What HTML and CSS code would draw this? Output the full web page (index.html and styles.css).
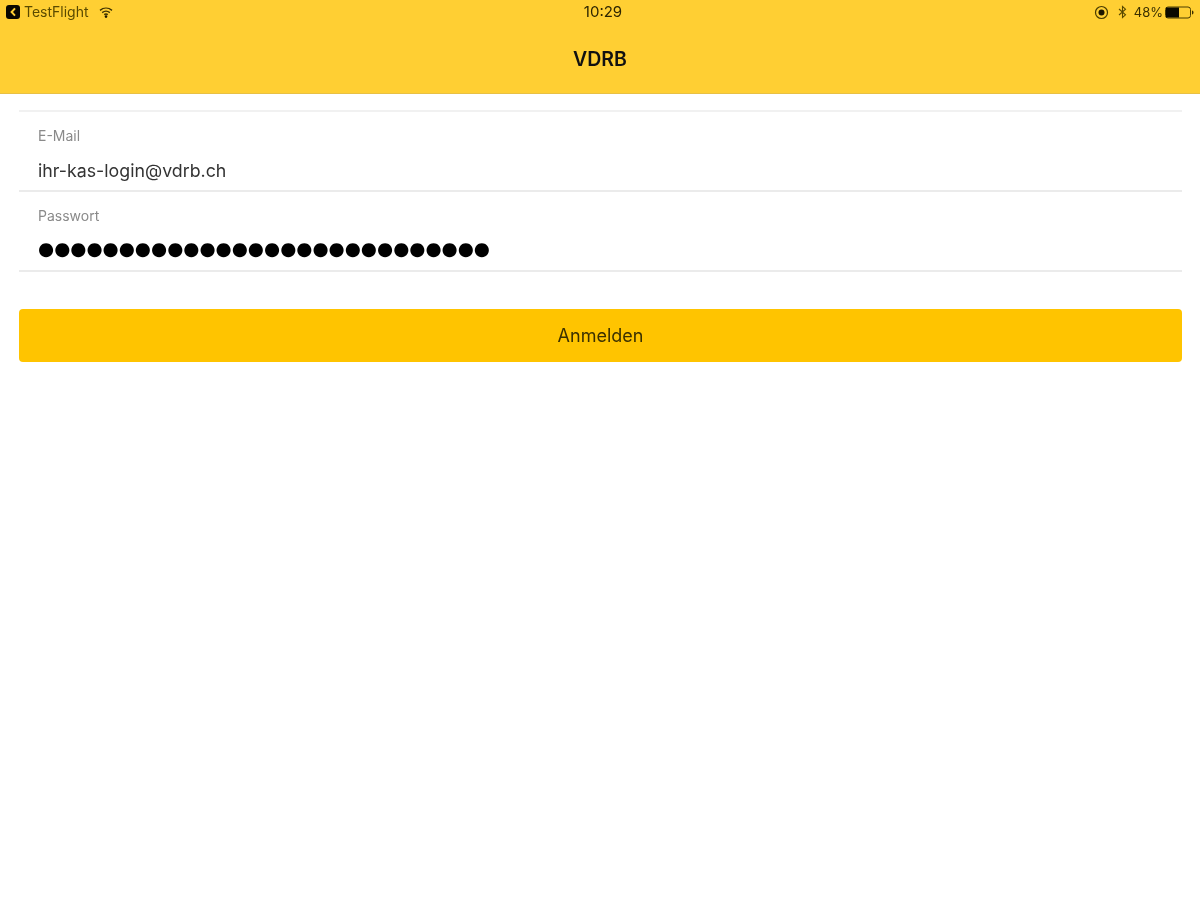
FILE: index.html
```html
<!DOCTYPE html>
<html lang="de">
<head>
<meta charset="utf-8">
<title>VDRB</title>
<link rel="stylesheet" href="styles.css">
</head>
<body>
<header class="nav">
  <div class="status">
    <div class="status-side">
      <svg class="tf-icon" width="14" height="14" viewBox="0 0 14 14"><rect width="14" height="14" rx="3" fill="#0a0800"/><path d="M9 3.4 5.6 7 9 10.6" fill="none" stroke="#ffcf33" stroke-width="2"/></svg>
      <span class="status-text tf-label">TestFlight</span>
      <svg class="wifi" width="14" height="11" viewBox="0 0 14 11"><path d="M1 3.4C4.6.4 9.4.4 13 3.4M3.2 5.6c2.3-1.8 5.3-1.8 7.6 0M5.2 7.6c1-.7 2.600-.7 3.600 0" fill="none" stroke="#3c3000" stroke-width="1.4"/><circle cx="7" cy="9.6" r="1.3" fill="#1c1600"/></svg>
    </div>
    <span class="status-text clock">10:29</span>
    <div class="status-side status-right">
      <svg width="15" height="15" viewBox="0 0 15 15"><circle cx="7.5" cy="7.5" r="6" fill="none" stroke="#4a3c00" stroke-width="1.2"/><circle cx="7.5" cy="7.5" r="3" fill="#1c1600"/></svg>
      <svg class="bt" width="9" height="14" viewBox="0 0 9 14"><path d="M1 4 7.500 9.800 4.500 12.500V1.500L7.500 4.200 1 10" fill="none" stroke="#5a4a00" stroke-width="1.100"/></svg>
      <span class="status-text battery-label">48%</span>
      <svg class="battery" width="29" height="13" viewBox="0 0 29 13"><rect x=".5" y="1" width="25" height="11" rx="2.500" fill="none" stroke="#4a3c00"/><rect x="1" y="1.500" width="13" height="10" fill="#0c0a00"/><path d="M27 4.500c1 .4 1.500 1.100 1.500 2s-.5 1.600-1.500 2z" fill="#3c3000"/></svg>
    </div>
  </div>
  <h1 class="title">VDRB</h1>
</header>
<main class="content">
  <div class="form">
    <div class="field">
      <div class="label">E-Mail</div>
      <div class="value">ihr-kas-login@vdrb.ch</div>
    </div>
    <div class="field">
      <div class="label">Passwort</div>
      <div class="value dots">●●●●●●●●●●●●●●●●●●●●●●●●●●●●</div>
    </div>
  </div>
  <button class="submit" type="button"><span class="submit-text">Anmelden</span></button>
</main>
</body>
</html>
```
FILE: styles.css
```css
* { box-sizing: border-box; }
html, body { margin: 0; padding: 0; background: #fff; height: 100%; }
body { font-family: Inter, "Liberation Sans", sans-serif; color: #222; overflow: hidden; }

.nav {
  height: 94px;
  background: #ffcf33;
  border-bottom: 1px solid #e8c044;
  padding: 0 7px 0 6px;
}
.status {
  height: 24px;
  display: grid;
  grid-template-columns: 1fr auto 1fr;
  align-items: center;
}
.status-side { display: flex; align-items: center; }
.status-right { justify-content: flex-end; }
.status-text { display: block; font-size: 14px; line-height: 16px; color: #3a2f00; filter: blur(.7px); }
.tf-label { margin-left: 4px; color: #5a4a00; }
.wifi { margin-left: 10px; }
.clock { font-size: 15px; margin-left: 7px; color: #2e2500; }
.bt { margin-left: 9px; }
.battery-label { margin-left: 7px; font-size: 13px; }
.battery { margin-left: 2px; margin-right: -1px; }
.title {
  margin: 0 0 0 1px;
  padding-top: 24px;
  text-align: center;
  font-size: 19.5px;
  line-height: 22px;
  font-weight: 600;
  color: #111;
  filter: blur(.6px);
}

.content { padding: 16px 18px 0 19px; }
.form { border-top: 2px solid #f1f1f1; }
.field {
  height: 80px;
  border-bottom: 2px solid #ebebeb;
  padding: 15px 0 0 19px;
}
.label { font-size: 14px; line-height: 18px; color: #8a8a8a; filter: blur(.7px); }
.value { margin-top: 14px; font-size: 17.8px; line-height: 24px; color: #333; filter: blur(.6px); }
.dots {
  margin-top: 12px;
  font-family: "DejaVu Sans", sans-serif;
  font-size: 18.5px;
  color: #000;
  white-space: nowrap;
}
.submit {
  display: block;
  width: 100%;
  height: 53px;
  margin-top: 37px;
  border: 0;
  border-radius: 4px;
  background: #ffc400;
  font: inherit;
  padding: 0;
}
.submit-text { font-size: 18px; color: #3a3000; filter: blur(.6px); display: inline-block; }
```
